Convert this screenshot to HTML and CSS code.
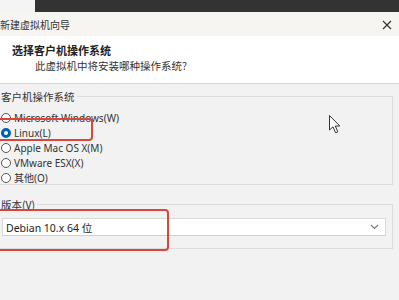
FILE: index.html
```html
<!DOCTYPE html>
<html lang="zh-CN">
<head>
<meta charset="utf-8">
<link rel="stylesheet" href="styles.css">
</head>
<body>
<div class="screen">
  <div class="topstrip"><div class="topstrip-left"></div><div class="topstrip-dark"></div></div>
  <div class="titlebar">
    <span class="title">新建虚拟机向导</span>
    <svg class="close" width="10" height="10" viewBox="0 0 10 10"><path d="M1 1L9 9M9 1L1 9" stroke="#333" stroke-width="1.2" fill="none"/></svg>
  </div>
  <div class="header">
    <div class="h-title">选择客户机操作系统</div>
    <div class="h-sub">此虚拟机中将安装哪种操作系统?</div>
  </div>
  <div class="content">
    <fieldset class="group group-os">
      <legend class="legend">客户机操作系统</legend>
      <div class="radios">
        <div class="radio"><span class="dot"></span>Microsoft Windows(W)</div>
        <div class="radio"><span class="dot checked"></span>Linux(L)</div>
        <div class="radio"><span class="dot"></span>Apple Mac OS X(M)</div>
        <div class="radio"><span class="dot"></span>VMware ESX(X)</div>
        <div class="radio"><span class="dot"></span>其他(O)</div>
      </div>
      <div class="mark mark-linux"></div>
      <svg class="cursor" width="12" height="19" viewBox="0 0 12 19"><path d="M0.5 0.5L0.5 15L4 11.8L6.6 17.8L8.8 16.8L6.3 11L10.8 11Z" fill="#fff" stroke="#333" stroke-width="1" stroke-linejoin="round"/></svg>
    </fieldset>
    <fieldset class="group group-ver">
      <legend class="legend">版本(V)</legend>
      <div class="select">
        <span>Debian 10.x 64 位</span>
        <svg class="chev" width="9" height="6" viewBox="0 0 9 6"><path d="M1 1L4.5 4.5L8 1" stroke="#777" stroke-width="1.1" fill="none"/></svg>
      </div>
      <div class="mark mark-ver"></div>
    </fieldset>
  </div>
</div>
</body>
</html>
```

FILE: styles.css
```css
html, body {
  margin: 0;
  padding: 0;
}
body {
  width: 399px;
  height: 300px;
  overflow: hidden;
  background: #f2f2f2;
  font-family: "Noto Sans", "Noto Sans CJK SC", sans-serif;
  font-size: 10px;
  color: #222;
}
.screen {
  width: 399px;
  height: 300px;
  overflow: hidden;
  display: flex;
  flex-direction: column;
}
.topstrip {
  height: 12px;
  display: flex;
}
.topstrip-left {
  width: 35px;
  background: #f4f4f4;
}
.topstrip-dark {
  flex: 1;
  background: #333333;
}
.titlebar {
  height: 24px;
  background: #f7f5f2;
  display: flex;
  align-items: center;
  justify-content: space-between;
  padding: 0 7px 0 0;
}
.title {
  margin-left: 0;
  font-size: 10px;
  color: #333;
}
.close {
  margin-top: 1px;
}
.header {
  background: #ffffff;
  border-bottom: 1px solid #d6d6d6;
  padding-left: 12px;
  box-sizing: border-box;
  height: 48px;
  padding-top: 6px;
}
.h-title {
  font-weight: bold;
  font-size: 11px;
  line-height: 16px;
  font-family: "Noto Sans CJK SC", sans-serif;
}
.h-sub {
  margin-left: 23px;
  font-size: 10.5px;
  line-height: 15px;
  font-family: "Noto Sans CJK SC", sans-serif;
  color: #333;
}
.content {
  flex: 1;
  background: #f2f2f2;
  padding-top: 6px;
}
.group {
  position: relative;
  margin: 0 6px 0 -8px;
  padding: 0 6px 0 7px;
  border: 1px solid #dcdcdc;
  min-width: 0;
}
.legend {
  padding: 0 2px 0 1px;
  margin-left: 0;
  line-height: 13px;
  font-size: 10.5px;
  font-family: "Noto Sans CJK SC", sans-serif;
  color: #333;
}
.group-os {
  height: 95px;
  box-sizing: border-box;
}
.radios {
  padding-top: 8px;
}
.radio {
  display: flex;
  align-items: center;
  height: 14.8px;
  color: #333;
}
.dot {
  width: 8px;
  height: 8px;
  border: 1px solid #555;
  border-radius: 50%;
  margin-right: 3px;
  margin-left: 1px;
  background: #fff;
  flex: none;
}
.dot.checked {
  border: 3px solid #0060b8;
  width: 4px;
  height: 4px;
}
.mark {
  position: absolute;
  border: 2px solid #d8463c;
  border-radius: 4px;
}
.mark-linux {
  left: 2px;
  top: 15px;
  width: 94px;
  height: 19px;
}
.cursor {
  position: absolute;
  left: 336px;
  top: 12px;
}
.group-ver {
  margin-top: 13px;
  height: 51px;
  box-sizing: border-box;
}
.select {
  margin: 7px 0 0 2px;
  height: 18px;
  width: 384px;
  box-sizing: border-box;
  background: #fff;
  border: 1px solid #dadada;
  border-bottom-color: #cfcfcf;
  display: flex;
  align-items: center;
  justify-content: space-between;
  padding: 0 6px 0 3px;
  color: #222;
  font-size: 10.5px;
}
.mark-ver {
  left: 2px;
  top: -2px;
  width: 170px;
  height: 38px;
}
```
